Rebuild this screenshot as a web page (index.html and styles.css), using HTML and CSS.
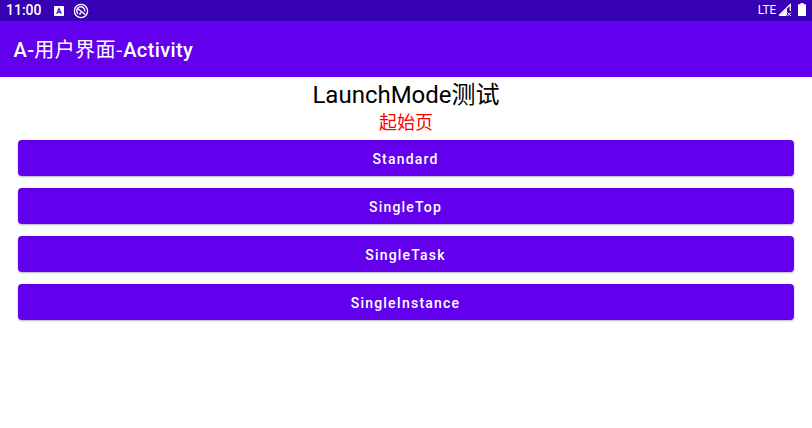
FILE: index.html
```html
<!DOCTYPE html>
<html lang="zh-CN">
<head>
<meta charset="utf-8">
<title>Activity</title>
<link rel="stylesheet" href="styles.css">
</head>
<body>
<div class="status">
  <span class="clock">11:00</span>
  <svg width="10" height="10" viewBox="0 0 10 10"><rect width="10" height="10" rx="1" fill="#fff"/><path d="M2.800 7.700 5 2.400 7.200 7.700M3.600 6.100h2.800" fill="none" stroke="#3700b3" stroke-width="1.100"/></svg>
  <svg class="ico-b" width="16" height="16" viewBox="0 0 16 16" fill="none" stroke="#fff"><circle cx="8" cy="8" r="6.600" stroke-width="1.300"/><path d="M5 10.600A4 4 0 1 1 11.700 8.500M4.600 5.500l7.600 6M6.500 11.500 8 9.500" stroke-width="1.500"/></svg>
  <span class="lte">LTE</span>
  <svg class="signal" width="14" height="14" viewBox="0 0 14 14"><path d="M1 12.500 12.300 1.500V8M1 12.500h7" fill="none" stroke="#fff" stroke-width="1.200"/><path d="M2 12.500 9 5.500v7z" fill="#fff"/><path d="m9.500 9.500 3.500 3.500m0-3.500L9.500 13" stroke="#fff"/></svg>
  <svg class="battery" width="8" height="13" viewBox="0 0 8 13"><path d="M2.500 0h3v1.300H7.500q.5 0 .5.500V12.500q0 .5-.5.500H.5q-.5 0-.5-.5V1.800q0-.5.5-.5h2z" fill="#fff"/></svg>
</div>
<header class="appbar">A-<span class="cjk">用户界面-</span>Activity</header>
<main>
  <h1>LaunchMode测试</h1>
  <p>起始页</p>
  <div class="buttons">
    <button>Standard</button>
    <button>SingleTop</button>
    <button>SingleTask</button>
    <button>SingleInstance</button>
  </div>
</main>
</body>
</html>
```
FILE: styles.css
```css
* { box-sizing: border-box; }
body { margin: 0; height: 428px; overflow: hidden; background: #fff; font-family: Roboto, "Noto Sans CJK SC", sans-serif; }
.status { height: 21px; background: #3700b3; color: #fff; display: flex; align-items: center; padding: 0 6px; }
.clock { font-size: 14px; font-weight: 500; width: 48px; line-height: 21px; height: 21px; }
.ico-b { margin-left: 9px; }
.lte { margin-left: auto; font-size: 12px; height: 21px; line-height: 20px; letter-spacing: -.2px; }
.signal { margin: -2px 6px 0 2px; }
.battery { margin-top: -2px; }
.appbar { height: 56px; background: #6200ee; color: #fff; padding: 0 13.500px; font-size: 20px; font-weight: 500; line-height: 55px; letter-spacing: .38px; }
.cjk { font-weight: 400; font-family: "Noto Sans CJK SC", sans-serif; }
main { text-align: center; }
h1 { margin: 0; font-size: 24px; font-weight: 400; line-height: 36px; height: 33px; color: #000; }
p { margin: 0; font-size: 18px; line-height: 26px; height: 24px; color: #f00; }
.buttons { display: flex; flex-direction: column; gap: 12px; padding: 6px 18.500px 0 17.500px; }
button { height: 36px; border: 0; border-radius: 4px; background: #6200ee; color: #fff; font: 500 14px/36px Roboto, sans-serif; letter-spacing: 1.2px; padding: 1px 0 0; box-shadow: 0 1px 2px rgba(0,0,0,.3); }
```
